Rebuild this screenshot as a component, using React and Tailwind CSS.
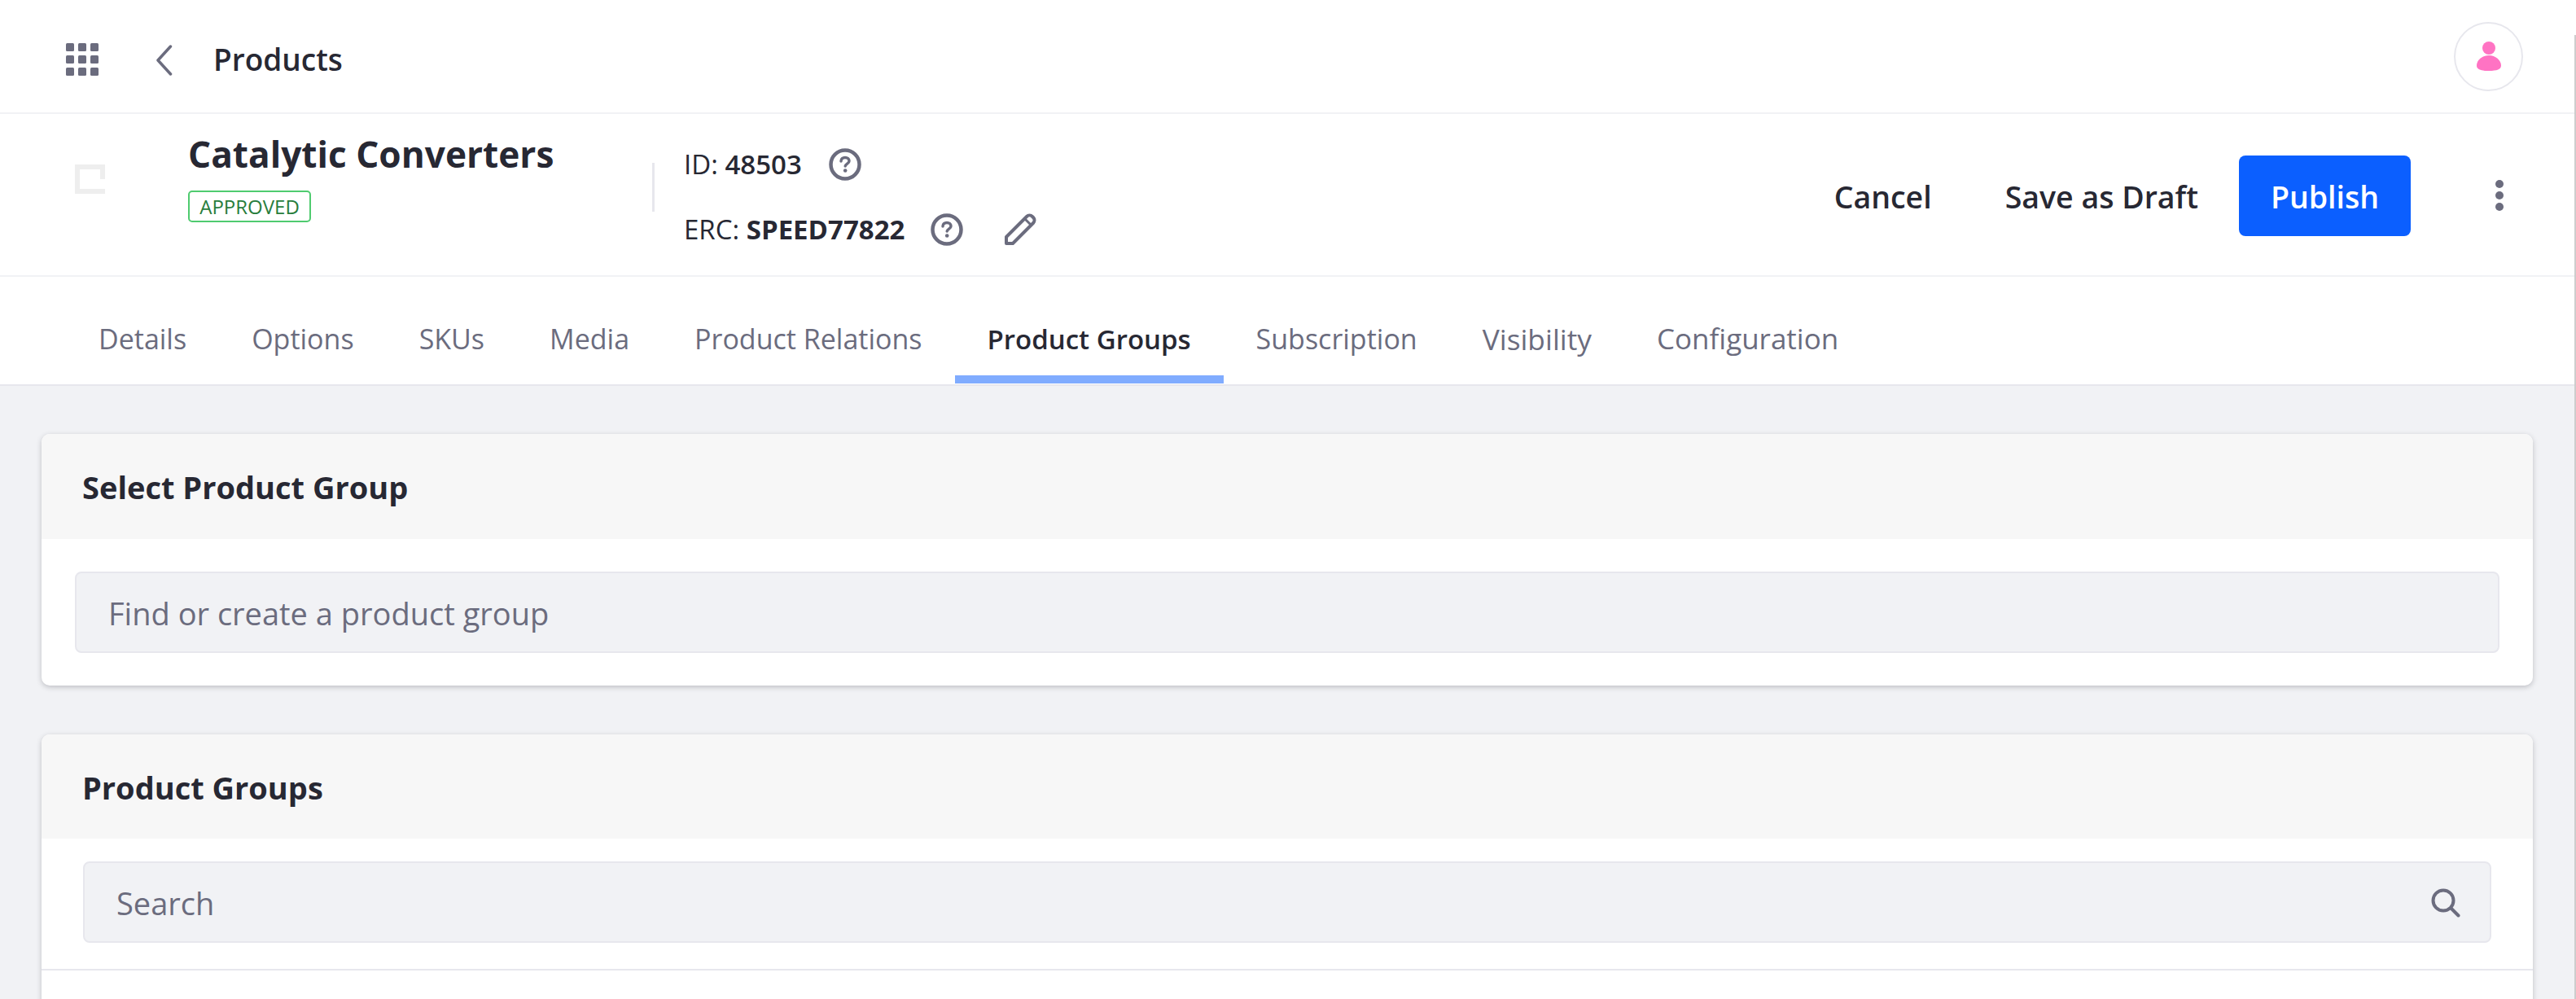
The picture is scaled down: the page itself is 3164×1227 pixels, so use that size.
import React from 'react';

const tabs = ['Details', 'Options', 'SKUs', 'Media', 'Product Relations', 'Product Groups', 'Subscription', 'Visibility', 'Configuration'];

const tabClass = (tab) => {
  if (tab === 'Product Groups') return 'border-[#80acff] text-[#272833] text-[33px] font-semibold';
  if (tab === 'Visibility') return 'border-transparent text-[#6b6c7e] text-[35.300px] font-medium';
  if (tab === 'Configuration') return 'border-transparent text-[#6b6c7e] text-[35px] font-medium';
  return 'border-transparent text-[#6b6c7e] text-[34px] font-medium';
};

const HelpIcon = () => (
  <svg width="40" height="40" viewBox="0 0 40 40" fill="none" className="shrink-0">
    <circle cx="20" cy="20" r="17.500" stroke="#6b6c7e" strokeWidth="4.500" />
    <path d="M15 16c0-2.800 2.200-4.500 5-4.500s5 1.700 5 4.200c0 3.300-4.300 3.400-4.800 6.300" stroke="#6b6c7e" strokeWidth="3.500" strokeLinecap="round" />
    <circle cx="20.200" cy="27.500" r="2.300" fill="#6b6c7e" />
  </svg>
);

const App = () => {
  return (
    <div className="w-full h-[1227px] overflow-hidden bg-[#f1f2f5] flex font-['Open_Sans','Noto_Sans',sans-serif]">
      <div className="flex-1 min-w-0">
        {/* Top bar */}
        <div className="h-[140px] bg-white border-b-2 border-[#f1f2f5] flex items-center pl-[81px] pr-[63px]">
          <svg width="40" height="40" viewBox="0 0 40 40" fill="#6b6c7e" className="shrink-0 mt-[8px]">
            <rect x="0" y="0" width="10" height="10" rx="1.500" />
            <rect x="15" y="0" width="10" height="10" rx="1.500" />
            <rect x="30" y="0" width="10" height="10" rx="1.500" />
            <rect x="0" y="15" width="10" height="10" rx="1.500" />
            <rect x="15" y="15" width="10" height="10" rx="1.500" />
            <rect x="30" y="15" width="10" height="10" rx="1.500" />
            <rect x="0" y="30" width="10" height="10" rx="1.500" />
            <rect x="15" y="30" width="10" height="10" rx="1.500" />
            <rect x="30" y="30" width="10" height="10" rx="1.500" />
          </svg>
          <svg width="20" height="38" viewBox="0 0 20 38" fill="none" className="ml-[71px] shrink-0 mt-[10px]">
            <path d="M17.500 2 2 19l15.500 17" stroke="#6b6c7e" strokeWidth="3.500" strokeLinecap="round" strokeLinejoin="round" />
          </svg>
          <span className="ml-[50px] text-[37px] font-semibold text-[#272833] mt-[8px]">Products</span>
          <div className="ml-auto w-[85px] h-[85px] rounded-full border-2 border-[#e7e7ed] flex items-center justify-center">
            <svg width="30" height="36" viewBox="0 0 30 36" fill="#ff73c3">
              <ellipse cx="15" cy="8" rx="8" ry="8" />
              <path d="M15 17c8 0 15 6 15 12.500C30 34 25 36 15 36S0 34 0 29.500C0 23 7 17 15 17Z" />
            </svg>
          </div>
        </div>

        {/* Product header */}
        <div className="h-[200px] bg-white border-b-2 border-[#f1f2f5] flex items-center pl-[92px] pr-[86px]">
          <svg width="37" height="36" viewBox="0 0 37 36" fill="none" className="shrink-0 mb-[38px]">
            <path d="M37 18H31V6H6V30H37V36H0V0H37Z" fill="#eeeeee" />
          </svg>
          <div className="ml-[102px] w-[570px] flex flex-col items-start mb-[44px]">
            <h1 className="text-[44.200px] leading-[56px] font-bold text-[#272833]">Catalytic Converters</h1>
            <span className="mt-[17px] h-[39px] w-[151px] flex items-center justify-center border-2 border-[#4fcb6f] rounded-[5px] text-[24px] text-[#287d3c]">APPROVED</span>
          </div>
          <div className="w-[3px] h-[60px] bg-[#e7e7ed] mb-[18px]" />
          <div className="ml-[36px] flex flex-col gap-[40px] text-[33px] leading-[40px] text-[#272833] mt-[6px]">
            <div className="flex items-center">
              <span>ID: <span className="font-semibold">48503</span></span>
              <span className="ml-[33px]"><HelpIcon /></span>
            </div>
            <div className="flex items-center">
              <span>ERC: <span className="font-bold">SPEED77822</span></span>
              <span className="ml-[32px]"><HelpIcon /></span>
              <svg width="40" height="40" viewBox="0 0 40 40" fill="none" className="ml-[50px] shrink-0">
                <path d="M3 37v-8L28 4c2-2 5-2 7 0l1 1c2 2 2 5 0 7L11 37H3Z" stroke="#6b6c7e" strokeWidth="4" strokeLinejoin="round" />
                <path d="M26 7l7 7" stroke="#6b6c7e" strokeWidth="3" />
              </svg>
            </div>
          </div>
          <div className="ml-auto flex items-center text-[37.500px] font-semibold text-[#272833]">
            <span className="mt-[6px]">Cancel</span>
            <span className="ml-[90px] mt-[6px]">Save as Draft</span>
            <button className="ml-[50px] w-[211px] h-[99px] rounded-[8px] bg-[#0b5fff] text-white mt-[2px]"><span className="relative top-[2px]">Publish</span></button>
            <svg width="12" height="40" viewBox="0 0 12 40" fill="#6b6c7e" className="ml-[103px] shrink-0 mt-[2px]">
              <circle cx="6" cy="6" r="5" />
              <circle cx="6" cy="20" r="5" />
              <circle cx="6" cy="34" r="5" />
            </svg>
          </div>
        </div>

        {/* Tabs */}
        <div className="h-[134px] bg-white border-b-2 border-[#e7e7ed] flex items-stretch pl-[81px]">
          {tabs.map((tab) => (
            <div
              key={tab}
              className={`px-[40px] flex items-center border-b-[10px] pt-[32px] mb-[1px] ${tabClass(tab)}`}
            >
              {tab}
            </div>
          ))}
        </div>

        {/* Select Product Group */}
        <div className="mt-[59px] mx-[51px] bg-white rounded-[10px] shadow-[0_2px_6px_rgba(39,40,51,0.25)] overflow-hidden">
          <div className="h-[129px] bg-[#f7f7f7] flex items-center pl-[50px]">
            <h2 className="text-[38px] font-bold text-[#272833] mt-[2px]">Select Product Group</h2>
          </div>
          <div className="pt-[40px] pb-[40px] pl-[41px] pr-[41px]">
            <div className="h-[100px] bg-[#f1f2f5] border-2 border-[#e7e7ed] rounded-[8px] flex items-center pl-[39px] text-[38px] text-[#6b6c7e]">
              <span className="mt-[2px]">Find or create a product group</span>
            </div>
          </div>
        </div>

        {/* Product Groups */}
        <div className="mt-[60px] mx-[51px] h-[600px] bg-white rounded-[10px] shadow-[0_2px_6px_rgba(39,40,51,0.25)] overflow-hidden">
          <div className="h-[128px] bg-[#f7f7f7] flex items-center pl-[50px]">
            <h2 className="text-[38px] font-bold text-[#272833] mt-[2px]">Product Groups</h2>
          </div>
          <div className="pt-[28px] pb-[32px] px-[51px] border-b-2 border-[#e7e7ed]">
            <div className="h-[100px] bg-[#f1f2f5] border-2 border-[#e7e7ed] rounded-[8px] flex items-center pl-[39px] pr-[38px] text-[38px] text-[#6b6c7e]">
              <span className="mt-[2px]">Search</span>
              <svg width="36" height="36" viewBox="0 0 36 36" fill="none" className="ml-auto shrink-0 mr-[-2px] mt-[2px]">
                <circle cx="15" cy="15" r="12.500" stroke="#6b6c7e" strokeWidth="4" />
                <path d="M24.500 24.500 33.500 33.500" stroke="#6b6c7e" strokeWidth="4" strokeLinecap="round" />
              </svg>
            </div>
          </div>
        </div>
      </div>
      <div className="w-[2px] bg-[#cdcdcd] border-t-[43px] border-white" />
    </div>
  );
};

export default App;
